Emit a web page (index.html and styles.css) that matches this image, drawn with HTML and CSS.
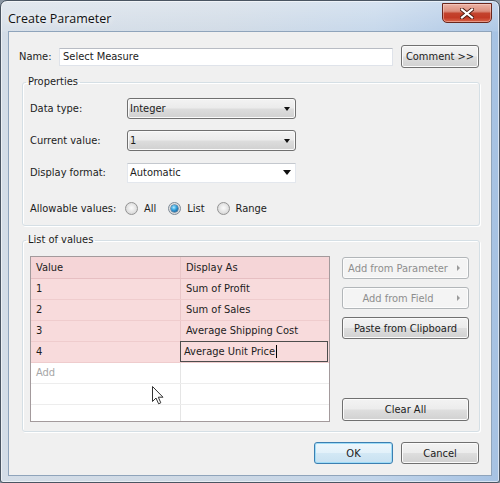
FILE: index.html
```html
<!DOCTYPE html>
<html>
<head>
<meta charset="utf-8">
<link rel="stylesheet" href="styles.css">
</head>
<body>
<div class="window">
  <div class="titlebar">
    <span class="title">Create Parameter</span>
    <div class="close">
      <svg width="14" height="11" viewBox="0 0 14 11">
        <path d="M2 1.5 L12 9.5 M12 1.5 L2 9.5" stroke="#4a1a12" stroke-width="4" stroke-linecap="square"/>
        <path d="M2 1.5 L12 9.5 M12 1.5 L2 9.5" stroke="#ffffff" stroke-width="2.2" stroke-linecap="square"/>
      </svg>
    </div>
  </div>
  <div class="client">
    <div class="name-row">
      <span class="name-label">Name:</span>
      <div class="textbox">Select Measure</div>
      <div class="btn comment">Comment &gt;&gt;</div>
    </div>

    <fieldset class="group props">
      <legend>Properties</legend>
      <div class="prop-row">
        <span class="lbl">Data type:</span>
        <div class="combo">Integer<span class="arrow"></span></div>
      </div>
      <div class="prop-row">
        <span class="lbl">Current value:</span>
        <div class="combo">1<span class="arrow"></span></div>
      </div>
      <div class="prop-row">
        <span class="lbl">Display format:</span>
        <div class="combo edit">Automatic<span class="arrow big"></span></div>
      </div>
      <div class="prop-row radios">
        <span class="lbl rlbl">Allowable values:</span>
        <div class="ritem"><span class="radio"></span>All</div>
        <div class="ritem"><span class="radio on"><span class="dot"></span></span>List</div>
        <div class="ritem"><span class="radio"></span>Range</div>
      </div>
    </fieldset>

    <fieldset class="group list">
      <legend>List of values</legend>
      <div class="list-body">
        <div class="grid">
          <div class="row head sel"><div class="cell c1">Value</div><div class="cell c2">Display As</div></div>
          <div class="row sel"><div class="cell c1">1</div><div class="cell c2">Sum of Profit</div></div>
          <div class="row sel"><div class="cell c1">2</div><div class="cell c2">Sum of Sales</div></div>
          <div class="row sel"><div class="cell c1">3</div><div class="cell c2">Average Shipping Cost</div></div>
          <div class="row sel"><div class="cell c1">4</div><div class="cell c2 editing"><div class="editor">Average Unit Price<span class="caret"></span></div></div></div>
          <div class="row"><div class="cell c1 add">Add</div><div class="cell c2"></div></div>
          <div class="row"><div class="cell c1"></div><div class="cell c2"></div></div>
          <div class="row"><div class="cell c1"></div><div class="cell c2"></div></div>
        </div>
        <div class="side">
          <div class="btn disabled sub"><span class="btxt">Add from Parameter</span><span class="tri"></span></div>
          <div class="btn disabled sub"><span class="btxt">Add from Field</span><span class="tri"></span></div>
          <div class="btn">Paste from Clipboard</div>
          <div class="btn clear">Clear All</div>
        </div>
      </div>
    </fieldset>

    <div class="footer">
      <div class="btn ok">OK</div>
      <div class="btn cancel">Cancel</div>
    </div>
  </div>

  <svg class="pointer" width="12" height="19" viewBox="0 0 12 19">
    <path d="M0.5 0.5 L0.5 15.5 L4 12 L6.6 17.8 L8.8 16.8 L6.3 11.2 L11 11.2 Z" fill="#ffffff" stroke="#333333" stroke-width="1" stroke-linejoin="miter"/>
  </svg>
</div>
</body>
</html>
```

FILE: styles.css
```css
html, body {
  margin: 0;
  padding: 0;
}
body {
  background: #8a96a3;
  font-family: "DejaVu Sans Condensed", "DejaVu Sans", sans-serif;
  font-size: 11px;
  color: #1c1c1c;
}

.window {
  position: relative;
  width: 500px;
  height: 483px;
  box-sizing: border-box;
  border: 1px solid #4a5562;
  border-radius: 7px 7px 3px 3px;
  background:
    linear-gradient(180deg, rgba(255,255,255,0.35) 0px, rgba(255,255,255,0.1) 30px, rgba(255,255,255,0) 31px),
    linear-gradient(90deg, #d4dde7 0%, #cdd8e4 45%, #c1d4e9 75%, #a6c2e3 100%);
  box-shadow: inset 0 0 0 1px rgba(255,255,255,0.55);
  display: flex;
  flex-direction: column;
  overflow: hidden;
}

.titlebar {
  height: 30px;
  flex: none;
  display: flex;
  align-items: flex-start;
  padding: 0 7px;
}
.title {
  font-family: "Open Sans", "Noto Sans", sans-serif;
  font-size: 12.5px;
  line-height: 17px;
  margin-top: 9px;
  color: #111;
  text-shadow: 0 0 6px #ffffff, 0 0 10px rgba(255,255,255,0.8);
}
.close {
  margin-left: auto;
  margin-top: 2px;
  width: 50px;
  height: 20px;
  box-sizing: border-box;
  border: 1px solid #6a261c;
  border-radius: 0 0 5px 5px;
  background: linear-gradient(180deg, #ebb2a5 0%, #dc8f7e 40%, #c3432d 52%, #c23a25 75%, #d8644a 100%);
  box-shadow: inset 0 0 0 1px rgba(255,220,210,0.45);
  display: flex;
  align-items: center;
  justify-content: center;
}
.close svg { display: block; }

.client {
  flex: 1;
  margin: 0 7px 6px;
  background: #f0f0f0;
  border: 1px solid #8fa4bb;
  display: flex;
  flex-direction: column;
  min-height: 0;
}

.name-row {
  display: flex;
  align-items: center;
  height: 23px;
  margin: 13px 12px 0 10px;
}
.name-label {
  width: 40px;
  flex: none;
}
.textbox {
  flex: 1;
  height: 18px;
  box-sizing: border-box;
  background: #fff;
  border: 1px solid #dfe3ea;
  border-top-color: #b8bcc4;
  padding-left: 3px;
  line-height: 16px;
  margin-right: 8px;
}

.btn {
  box-sizing: border-box;
  height: 22px;
  border: 1px solid #707070;
  border-radius: 3px;
  background: linear-gradient(180deg, #f3f3f3 0%, #ececec 48%, #dedede 52%, #d1d1d1 100%);
  box-shadow: inset 0 0 0 1px #fbfbfb;
  display: flex;
  align-items: center;
  justify-content: center;
  color: #1c1c1c;
  white-space: nowrap;
}
.comment {
  width: 78px;
  height: 23px;
  flex: none;
}

.group {
  border: 1px solid #d5dfe5;
  border-radius: 3px;
  box-shadow: inset 1px 1px 0 #ffffff, 1px 1px 0 #ffffff;
  min-width: 0;
  margin: 7px 11px 0 13px;
  padding: 9px 10px 9px 7px;
}
.group legend {
  padding: 0 2px;
  margin-left: -4px;
  line-height: 14px;
  font-size: 11px;
}

.prop-row {
  display: flex;
  align-items: center;
  height: 21px;
}
.prop-row + .prop-row { margin-top: 11px; }
.prop-row.radios {
  height: 16px;
  margin-top: 17px;
}
.lbl {
  width: 97px;
  flex: none;
}
.rlbl { width: 95px; }

.combo {
  width: 169px;
  height: 21px;
  box-sizing: border-box;
  border: 1px solid #707070;
  border-radius: 3px;
  background: linear-gradient(180deg, #f3f3f3 0%, #ebebeb 48%, #dddddd 52%, #d0d0d0 100%);
  box-shadow: inset 0 0 0 1px #fafafa;
  display: flex;
  align-items: center;
  padding: 0 5px 0 2px;
}
.combo.edit {
  background: #ffffff;
  border: 1px solid #e3e7ed;
  border-top-color: #c4c8ce;
  border-radius: 0;
  box-shadow: none;
  height: 20px;
}
.arrow {
  margin-left: auto;
  width: 0;
  height: 0;
  border-left: 3.5px solid transparent;
  border-right: 3.5px solid transparent;
  border-top: 4px solid #111;
}
.arrow.big {
  border-left-width: 4.5px;
  border-right-width: 4.5px;
  border-top-width: 5px;
  margin-right: -1px;
}

.ritem {
  display: flex;
  align-items: center;
  gap: 6px;
  margin-right: 12px;
}
.radio {
  width: 13px;
  height: 13px;
  box-sizing: border-box;
  border-radius: 50%;
  border: 1px solid #939393;
  background: radial-gradient(circle at 50% 45%, #fbfbfb 0%, #e2e2e2 55%, #c9c9c9 100%);
  display: flex;
  align-items: center;
  justify-content: center;
  flex: none;
}
.radio.on {
  border-color: #7e8a96;
}
.dot {
  width: 7px;
  height: 7px;
  border-radius: 50%;
  background: radial-gradient(circle at 40% 35%, #b6ecff 0%, #39a6e0 40%, #0f5791 85%, #0a3f6e 100%);
  box-shadow: 0 0 0 0.5px #1b4f7c;
}

.list-body {
  display: flex;
}
.grid {
  width: 300px;
  height: 166px;
  flex: none;
  box-sizing: border-box;
  border: 1px solid #a39a9c;
  background: #ffffff;
  overflow: hidden;
}
.row {
  display: flex;
  height: 21px;
  box-sizing: border-box;
  border-bottom: 1px solid #ededed;
}
.row.head { height: 22px; }
.cell {
  box-sizing: border-box;
  padding-left: 5px;
  line-height: 20px;
  white-space: nowrap;
}
.row.head .cell { line-height: 21px; }
.c1 {
  width: 150px;
  flex: none;
  border-right: 1px solid #e5e5e5;
}
.c2 { flex: 1; }
.row.sel {
  background: #f8dbdc;
  border-bottom-color: #efcccd;
}
.row.sel .c1 { border-right-color: #e9c6c8; }
.row.head {
  background: #f5d5d7;
  border-bottom-color: #e6bfc2;
}
.add { color: #a6a6a6; }

.cell.editing {
  padding-left: 0;
}
.editor {
  box-sizing: border-box;
  height: 21px;
  margin: -1px 1px -1px -1px;
  border: 1px solid #4d4d4d;
  background: #f8dbdc;
  padding-left: 3px;
  line-height: 19px;
  display: flex;
  align-items: center;
}
.caret {
  display: inline-block;
  width: 1px;
  height: 13px;
  background: #000;
  margin-left: 1px;
}

.side {
  width: 127px;
  margin-left: 12px;
  display: flex;
  flex-direction: column;
  padding-top: 1px;
  padding-bottom: 1px;
  gap: 8px;
}
.btn.disabled {
  color: #8e8e8e;
  border-color: #b2b6b9;
  background: #f4f4f4;
  box-shadow: inset 0 0 0 1px #fcfcfc;
}
.btn.sub {
  justify-content: flex-start;
}
.btxt {
  flex: 1;
  text-align: center;
  padding-left: 1px;
}
.tri {
  width: 0;
  height: 0;
  border-top: 3px solid transparent;
  border-bottom: 3px solid transparent;
  border-left: 3px solid #9a9a9a;
  margin: 0 8px 0 5px;
}
.clear {
  margin-top: auto;
  height: 23px;
}

.footer {
  display: flex;
  justify-content: flex-end;
  gap: 8px;
  margin: 10px 12px 0 0;
}
.ok, .cancel {
  height: 22px;
}
.ok {
  width: 79px;
  border-color: #3c7fb1;
  background: linear-gradient(180deg, #eef7fc 0%, #e3f1fa 48%, #d3e8f5 52%, #c8e1f1 100%);
  box-shadow: inset 0 0 0 1px #9fdcf7;
}
.cancel {
  width: 78px;
}

.pointer {
  position: absolute;
  left: 151px;
  top: 385px;
}
```
